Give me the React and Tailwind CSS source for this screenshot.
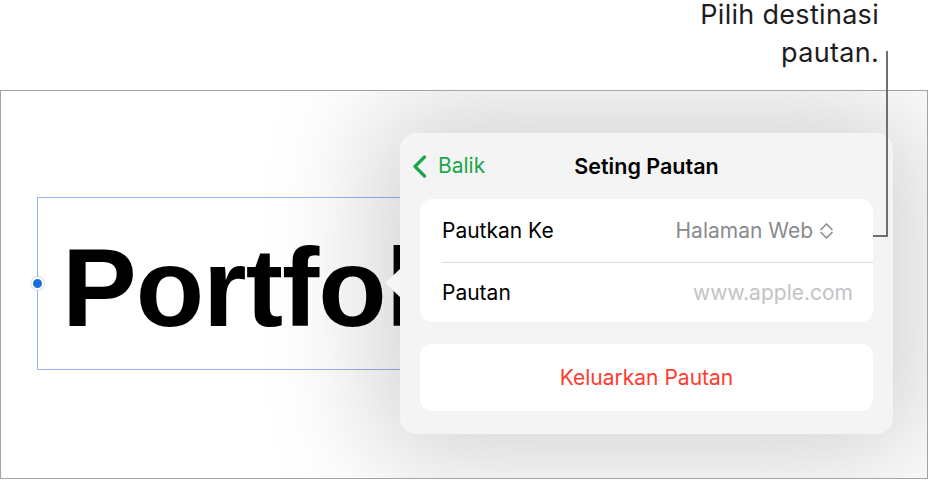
import React from "react";

const ui = { fontFamily: "Inter, 'Noto Sans', sans-serif" };

function BackChevron() {
  return (
    <svg width="15" height="23" viewBox="0 0 15 23" fill="none">
      <path d="M12.5 2 L3 11.5 L12.5 21" stroke="#1ea54b" strokeWidth="3.2" strokeLinecap="round" strokeLinejoin="round" />
    </svg>
  );
}

function UpDown() {
  return (
    <svg width="15" height="18" viewBox="0 0 15 18" fill="none">
      <path d="M2 7.5 L7.5 2 L13 7.5 M2 10.5 L7.5 16 L13 10.5" stroke="#8e8e93" strokeWidth="1.7" strokeLinecap="round" strokeLinejoin="round" />
    </svg>
  );
}

export default function App() {
  return (
    <div className="relative h-[481px] w-[931px] overflow-hidden bg-white" style={ui}>
      {/* callout */}
      <div className="flex h-[90px] justify-end pr-[52px]">
        <p className="text-right text-[27px] tracking-[0.3px] text-[#1d1d1f]">
          <span className="block leading-[30px]">Pilih destinasi</span>
          <span className="block leading-[46px]">pautan.</span>
        </p>
      </div>

      {/* document canvas */}
      <div className="relative h-[389px] w-[928px] overflow-hidden border border-[#a3a3a3] bg-white">
        <div className="absolute left-[36px] top-[106px] h-[173px] w-[364px] border border-r-0 border-[#94b4f5]">
          <div className="h-full w-full overflow-hidden">
            <span
              className="block whitespace-nowrap pl-[24px] pt-[34px] text-[112px] font-bold leading-none tracking-[-1px] text-black"
              style={{ fontFamily: "'Liberation Sans', Arial, sans-serif" }}
            >
              Portfol
            </span>
          </div>
          <span className="absolute left-[-7px] top-[79px] h-[13px] w-[13px] rounded-full border-2 border-white bg-[#1a6fe0] shadow-[0_0_2px_rgba(0,0,0,0.35)]" />
        </div>

        {/* popover */}
        <div className="absolute left-[399px] top-[42px] flex h-[301px] w-[493px] flex-col rounded-[16px] bg-[#f4f4f4] px-[20px] pb-[23px] shadow-[0_0_110px_30px_rgba(0,0,0,0.17)]">
          <span className="absolute left-[-15px] top-[136px] h-0 w-0 border-y-[14px] border-r-[15px] border-y-transparent border-r-[#f6f6f6]" />
          <div className="relative flex h-[66px] items-center justify-center">
            <div className="absolute left-[-8px] flex items-center gap-[11px] text-[21px] text-[#1ea54b]">
              <BackChevron />
              <span>Balik</span>
            </div>
            <h1 className="text-[21.5px] font-semibold text-black">Seting Pautan</h1>
          </div>

          <div className="flex flex-col rounded-[12px] bg-white pl-[22px]">
            <div className="flex h-[63px] items-center justify-between pr-[39px] text-[21px]">
              <span className="text-black">Pautkan Ke</span>
              <span className="flex items-center gap-[6px] text-[#8a8a8e]">
                Halaman Web
                <UpDown />
              </span>
            </div>
            <div className="h-px bg-[#dcdcde]" />
            <div className="flex h-[59px] items-center justify-between pr-[20px] text-[21px]">
              <span className="text-black">Pautan</span>
              <span className="text-[#c3c3c6]">www.apple.com</span>
            </div>
          </div>

          <button className="mt-[22px] flex h-[67px] items-center justify-center rounded-[12px] bg-white text-[21px] text-[#ff3b30]">
            Keluarkan Pautan
          </button>
        </div>
      </div>

      {/* leader line */}
      <svg className="absolute left-0 top-0" width="931" height="481" fill="none">
        <path d="M887 51 V236 H873" stroke="#6f6f6f" strokeWidth="2" />
      </svg>
    </div>
  );
}
